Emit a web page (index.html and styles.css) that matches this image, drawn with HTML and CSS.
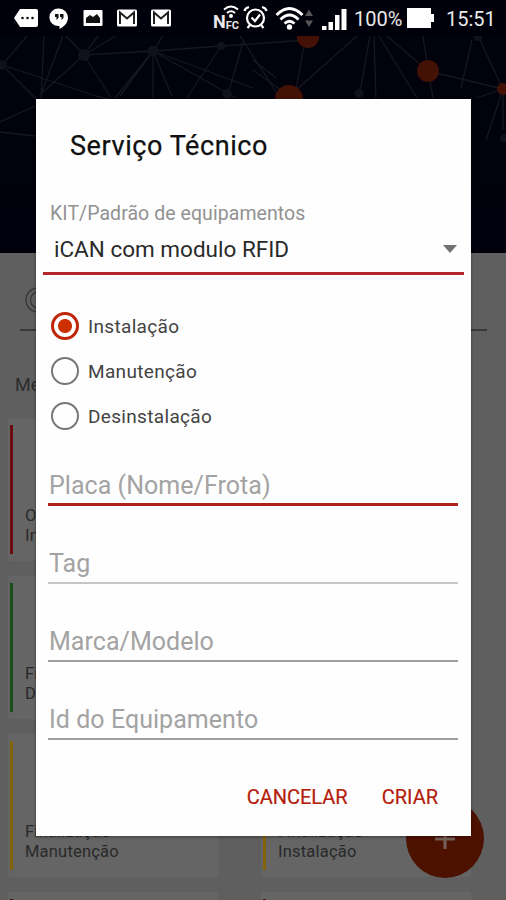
FILE: index.html
```html
<!DOCTYPE html>
<html lang="pt-BR">
<head>
<meta charset="utf-8">
<title>Serviço Técnico</title>
<link rel="stylesheet" href="styles.css">
</head>
<body>
<div class="screen">
  <header class="hero">
    <svg class="network" width="506" height="217" viewBox="0 36 506 217" fill="none">
      <g stroke="#17171f" stroke-width="1.3">
        <path d="M27 36L2 65L35 98M2 65L96 96L150 110M44 36L41 98M63 36L41 94L84 55M66 36L84 55L98 36M84 55L116 36M84 55L111 98M84 55L153 51L163 36M153 51L115 98M153 51L120 96M153 51V98M153 51L172 96M153 51L253 88M153 51L236 98M153 51L221 46L308 40M221 46L187 98M243 42L227 98M240 36L280 98M253 70L288 95M253 60L276 78M304 45L296 90L357 36M370 36L359 98M374 36L376 98M379 36L417 98M387 36L428 71M423 36L428 71L433 98M428 71L503 89L478 36M472 40L461 88M503 89L476 98M503 89L486 140M503 89V130M0 122L35 106M0 132L35 136"/>
      </g>
      <g fill="#111119"><circle cx="2" cy="65" r="5"/><circle cx="84" cy="55" r="6"/><circle cx="153" cy="51" r="5.5"/><circle cx="221" cy="46" r="4"/><circle cx="227" cy="94" r="5"/><circle cx="359" cy="93" r="4.5"/><circle cx="478" cy="37" r="4"/><circle cx="504" cy="138" r="4"/></g>
      <g fill="#431106"><circle cx="308" cy="37" r="11"/><circle cx="289" cy="99" r="14"/><circle cx="428" cy="71" r="11"/><circle cx="503" cy="89" r="6"/></g>
    </svg>
  </header>
  <div class="search">
    <svg width="28" height="28" viewBox="0 0 28 28" fill="none" stroke="#353535" stroke-width="1.3"><circle cx="13" cy="13" r="12"/><circle cx="14" cy="13" r="8.5"/></svg>
  </div>
  <h2 class="section">Meus</h2>
  <main class="grid">
    <article class="card red"><p>Ordem<br>Instalação</p></article>
    <article class="card red"><p>Ordem<br>Instalação</p></article>
    <article class="card green"><p>Finalização<br>Desinstalação</p></article>
    <article class="card green"><p>Finalização<br>Desinstalação</p></article>
    <article class="card yellow"><p>Finalização<br>Manutenção</p></article>
    <article class="card yellow"><p>Finalização<br>Instalação</p></article>
    <article class="card maroon"></article>
    <article class="card maroon"></article>
  </main>
  <div class="fab"><svg width="22" height="22" viewBox="0 0 22 22"><path d="M1 11H21M11 1V21" stroke="#77605a" stroke-width="3"/></svg></div>

  <div class="status">
    <svg width="210" height="36" viewBox="0 0 210 36">
      <g fill="#fff">
        <path d="M20 9H36Q38 9 38 11V25Q38 27 36 27H20L14 18Z"/>
        <path d="M59 8.5A9 9 0 0 1 68 17.5C68 23 64 26.5 59.5 29V26A9 8.8 0 1 1 59 8.5Z"/>
        <rect x="83.500" y="10" width="19" height="16" rx="1"/>
        <rect x="117" y="9.500" width="20" height="17" rx="1.500"/>
        <rect x="151" y="9.500" width="20" height="17" rx="1.500"/>
      </g>
      <g fill="#111"><circle cx="22.500" cy="18" r="1.300"/><circle cx="27.500" cy="18" r="1.300"/><circle cx="32.500" cy="18" r="1.300"/>
      <path d="M55 14H58.500V18L56.500 20V17H55ZM60 14H63.500V18L61.500 20V17H60Z"/>
      <path d="M86 23V18L90 15L93 17L97 14L100 18V23Z"/></g>
      <g fill="none" stroke="#222" stroke-width="2"><path d="M120 24V12.500L127 18.500L134 12.500V24M154 24V12.500L161 18.500L168 12.500V24"/></g>
    </svg>
    <span class="nfc"><b>N</b><i>FC</i>
      <svg width="16" height="13" viewBox="0 0 16 13" fill="none" stroke="#fff" stroke-width="2"><path d="M1 4.500Q8-1.500 15 4.500M4 8Q8 4.500 12 8"/><circle cx="8" cy="11" r="1" fill="#fff"/></svg>
    </span>
    <svg class="radio-icons" width="108" height="36" viewBox="242 0 108 36" fill="none" stroke="#fff" stroke-width="2.200">
      <circle cx="255.500" cy="18" r="8.500"/><path d="M251.500 17.500L255 21L260 14.500M244.500 11Q245 8 249 7M262 7Q266 8 266.500 11M250 25L247.500 28M261 25L263.500 28"/>
      <path stroke-width="2.800" d="M276.500 15Q289.500 2 302.500 15M280.500 19.500Q289.500 10.500 298.500 19.500M284.500 23.500Q289.500 19 294.500 23.500"/>
      <circle cx="289.500" cy="27" r="1.600" fill="#fff"/>
      <path fill="#555" stroke="none" d="M305 16L309 9.500L313 16ZM305 20.500L309 27L313 20.500Z"/>
      <path fill="#fff" stroke="none" d="M322 26H326.500V30H322ZM328.500 22H333V30H328.500ZM335 15H339.500V30H335ZM341.500 9H346.500V30H341.500Z"/>
    </svg>
    <span class="pct">100%</span>
    <svg class="battery" width="29" height="20" viewBox="0 0 29 20"><path fill="#fff" d="M1 0H25V6H28V14H25V20H1Z"/></svg>
    <span class="clock">15:51</span>
  </div>

  <section class="dialog">
    <h1>Serviço Técnico</h1>
    <div class="label">KIT/Padrão de equipamentos</div>
    <div class="select"><span>iCAN com modulo RFID</span><svg width="14" height="8" viewBox="0 0 14 8"><path fill="#737373" d="M0 0H14L7 8Z"/></svg></div>
    <div class="options">
      <div class="option on"><i class="dot"></i><span>Instalação</span></div>
      <div class="option"><i class="dot"></i><span>Manutenção</span></div>
      <div class="option"><i class="dot"></i><span>Desinstalação</span></div>
    </div>
    <div class="fields">
      <div class="field active"><span>Placa (Nome/Frota)</span></div>
      <div class="field pale"><span>Tag</span></div>
      <div class="field"><span>Marca/Modelo</span></div>
      <div class="field"><span>Id do Equipamento</span></div>
    </div>
    <footer class="actions"><span>CANCELAR</span><span>CRIAR</span></footer>
  </section>
</div>
</body>
</html>
```
FILE: styles.css
```css
* { box-sizing: border-box; }
body { margin: 0; font-family: Roboto, "Liberation Sans", sans-serif; }
h1, h2, p { margin: 0; font-weight: 400; }
svg { display: block; flex: none; }
.screen { position: relative; width: 506px; height: 900px; overflow: hidden; background: #5f5f5f; }

.hero { height: 253px; padding-top: 36px; background: linear-gradient(#02020c 60%, #01010e); }
.search { height: 78px; margin: 0 19px 0 20px; padding: 34px 0 0 5px; border-bottom: 2px solid #393939; }
.section { height: 87px; padding: 43px 0 0 15px; font-size: 18px; line-height: 22px; color: #2c2c2c; }
.grid { display: grid; grid-template-columns: 210px 210px; grid-auto-rows: 143px; gap: 15px 43px; padding-left: 8px; }
.card { display: flex; align-items: flex-end; background: #656565; border-radius: 2px; padding: 7px 0 7px 2px; }
.card::before { content: ""; align-self: stretch; width: 3px; background: var(--bar); }
.card p { padding: 0 0 8px 12px; font-size: 16.500px; line-height: 20px; letter-spacing: .2px; color: #292929; }
.red { --bar: #6b0d10; }
.green { --bar: #174d19; }
.yellow { --bar: #836307; }
.maroon { --bar: #470d12; }
.fab { position: absolute; left: 406px; top: 799px; width: 78px; height: 79px; border-radius: 50%; background: #4d1100; display: flex; align-items: center; justify-content: center; }

.status { position: absolute; inset: 0 0 auto; height: 36px; display: flex; background: #00000b; color: #e9e9e9; }
.nfc { display: flex; position: relative; width: 32px; padding: 12px 0 0 3px; line-height: 20px; }
.nfc b { font-size: 18px; font-weight: 700; }
.nfc i { font-size: 11px; font-style: normal; font-weight: 700; padding-top: 4px; }
.nfc svg { position: absolute; left: 13px; top: 5px; }
.pct { width: 56px; padding-left: 4px; font-size: 20px; line-height: 38px; }
.battery { margin-top: 8px; }
.clock { margin-left: 11px; font-size: 20px; line-height: 38px; }

.dialog { position: absolute; left: 36px; top: 99px; width: 435px; height: 737px; background: #fefefe; box-shadow: 0 1px 3px #0006; display: flex; flex-direction: column; white-space: nowrap; }
.dialog h1 { height: 98px; padding: 30px 0 0 34px; font-size: 27px; line-height: 34px; letter-spacing: .58px; color: #101010; -webkit-text-stroke: .25px; }
.label { height: 34px; padding: 5px 0 0 14px; font-size: 19.500px; line-height: 24px; letter-spacing: .06px; color: #929292; }
.select { height: 45px; margin: -1px 7px 0; padding: 0 7px 4px 11px; display: flex; align-items: center; justify-content: space-between; border-bottom: 3px solid #b5252d; font-size: 22.500px; color: #2a2a2a; }
.options { height: 164px; padding: 28px 0 0 15px; }
.option { display: flex; align-items: center; gap: 9px; height: 45px; font-size: 19px; letter-spacing: .33px; color: #434343; }
.option span { padding-top: 2px; }
.dot { width: 28px; height: 28px; border: 2px solid #777; border-radius: 50%; }
.on .dot { border: 3px solid #be2509; background: radial-gradient(circle, #cc3000 6.500px, #fefefe 7.500px); }
.fields { margin: 0 13px 0 12px; }
.field { height: 78px; padding: 30px 0 0 1px; font-size: 25px; line-height: 34px; letter-spacing: .04px; color: #a3a3a3; display: flex; flex-direction: column; }
.field::after { content: ""; height: 2px; margin: 1px 0 0 -1px; background: #a0a0a0; flex: none; }
.field.active::after { height: 3px; background: #ad231d; margin-top: 0; }
.field.pale::after { background: #c6c6c6; }
.actions { display: flex; justify-content: flex-end; gap: 34px; padding: 32px 33px 0 0; font-size: 20px; line-height: 28px; color: #b4200a; -webkit-text-stroke: .2px; }
```
